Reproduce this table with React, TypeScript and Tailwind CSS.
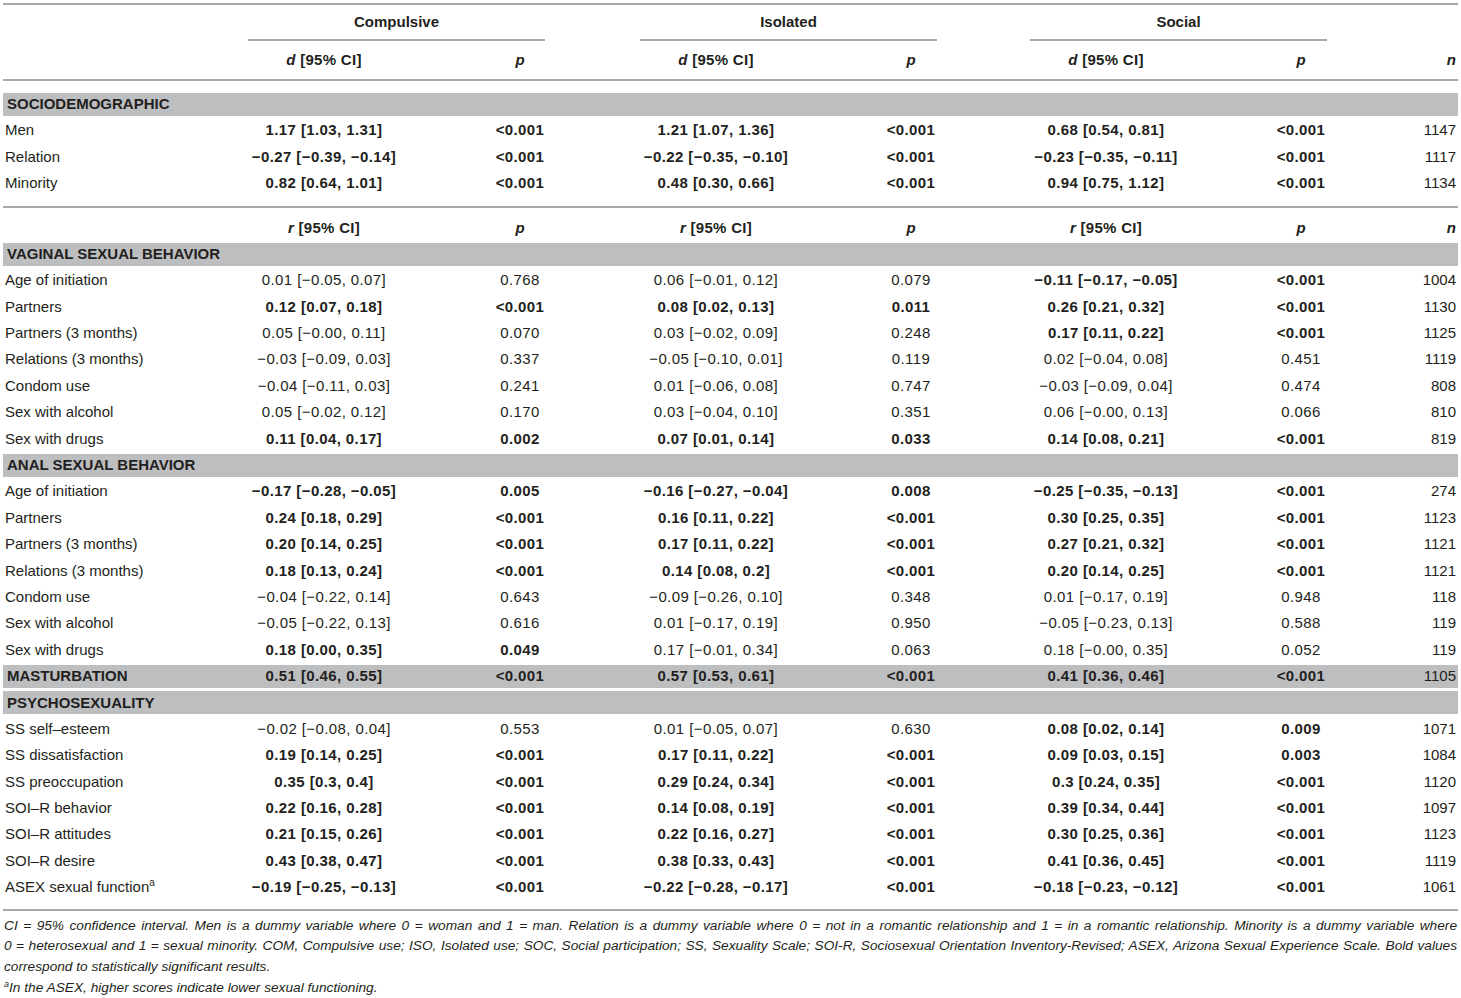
import React from "react";

type Row = { label: React.ReactNode; v: string[]; n: string; band?: boolean };

const GRID =
  "grid grid-cols-[245px_152px_240px_152px_238px_152px_238px_38px] items-center";

function Cell({ s }: { s: string }) {
  const bold = s.startsWith("*");
  const t = bold ? s.slice(1) : s;
  return (
    <div className={"text-center whitespace-nowrap tracking-[0.4px] " + (bold ? "font-bold" : "")}>{t}</div>
  );
}

function DataRow({ r }: { r: Row }) {
  if (r.band) {
    return (
      <div className="h-[26.4px] flex items-center">
        <div className={GRID + " h-[23px] w-full bg-[#bcbec0]"}>
          <div className="pl-[4px] font-bold">{r.label}</div>
          {r.v.map((s, i) => (
            <Cell key={i} s={s} />
          ))}
          <div className="text-right pr-[2px]">{r.n}</div>
        </div>
      </div>
    );
  }
  return (
    <div className={GRID + " h-[26.4px]"}>
      <div className="pl-[2px] whitespace-nowrap">{r.label}</div>
      {r.v.map((s, i) => (
        <Cell key={i} s={s} />
      ))}
      <div className="text-right pr-[2px]">{r.n}</div>
    </div>
  );
}

function Band({ title }: { title: string }) {
  return (
    <div className="h-[26.4px] flex items-center">
      <div className="h-[23px] w-full bg-[#bcbec0] flex items-center pl-[4px] font-bold">{title}</div>
    </div>
  );
}

function SubHead({ letter, tall }: { letter: string; tall?: boolean }) {
  return (
    <div className={GRID + " font-bold " + (tall ? "h-[38px]" : "h-[26.4px]")}>
      <div />
      {[0, 1, 2].map((k) => (
        <React.Fragment key={k}>
          <div className="text-center tracking-[0.3px]">
            <i>{letter}</i> [95% CI]
          </div>
          <div className="text-center">
            <i>p</i>
          </div>
        </React.Fragment>
      ))}
      <div className="text-right pr-[2px]">
        <i>n</i>
      </div>
    </div>
  );
}

const socio: Row[] = [
  { label: "Men", v: ["*1.17 [1.03, 1.31]", "*<0.001", "*1.21 [1.07, 1.36]", "*<0.001", "*0.68 [0.54, 0.81]", "*<0.001"], n: "1147" },
  { label: "Relation", v: ["*−0.27 [−0.39, −0.14]", "*<0.001", "*−0.22 [−0.35, −0.10]", "*<0.001", "*−0.23 [−0.35, −0.11]", "*<0.001"], n: "1117" },
  { label: "Minority", v: ["*0.82 [0.64, 1.01]", "*<0.001", "*0.48 [0.30, 0.66]", "*<0.001", "*0.94 [0.75, 1.12]", "*<0.001"], n: "1134" },
];

const vaginal: Row[] = [
  { label: "Age of initiation", v: ["0.01 [−0.05, 0.07]", "0.768", "0.06 [−0.01, 0.12]", "0.079", "*−0.11 [−0.17, −0.05]", "*<0.001"], n: "1004" },
  { label: "Partners", v: ["*0.12 [0.07, 0.18]", "*<0.001", "*0.08 [0.02, 0.13]", "*0.011", "*0.26 [0.21, 0.32]", "*<0.001"], n: "1130" },
  { label: "Partners (3 months)", v: ["0.05 [−0.00, 0.11]", "0.070", "0.03 [−0.02, 0.09]", "0.248", "*0.17 [0.11, 0.22]", "*<0.001"], n: "1125" },
  { label: "Relations (3 months)", v: ["−0.03 [−0.09, 0.03]", "0.337", "−0.05 [−0.10, 0.01]", "0.119", "0.02 [−0.04, 0.08]", "0.451"], n: "1119" },
  { label: "Condom use", v: ["−0.04 [−0.11, 0.03]", "0.241", "0.01 [−0.06, 0.08]", "0.747", "−0.03 [−0.09, 0.04]", "0.474"], n: "808" },
  { label: "Sex with alcohol", v: ["0.05 [−0.02, 0.12]", "0.170", "0.03 [−0.04, 0.10]", "0.351", "0.06 [−0.00, 0.13]", "0.066"], n: "810" },
  { label: "Sex with drugs", v: ["*0.11 [0.04, 0.17]", "*0.002", "*0.07 [0.01, 0.14]", "*0.033", "*0.14 [0.08, 0.21]", "*<0.001"], n: "819" },
];

const anal: Row[] = [
  { label: "Age of initiation", v: ["*−0.17 [−0.28, −0.05]", "*0.005", "*−0.16 [−0.27, −0.04]", "*0.008", "*−0.25 [−0.35, −0.13]", "*<0.001"], n: "274" },
  { label: "Partners", v: ["*0.24 [0.18, 0.29]", "*<0.001", "*0.16 [0.11, 0.22]", "*<0.001", "*0.30 [0.25, 0.35]", "*<0.001"], n: "1123" },
  { label: "Partners (3 months)", v: ["*0.20 [0.14, 0.25]", "*<0.001", "*0.17 [0.11, 0.22]", "*<0.001", "*0.27 [0.21, 0.32]", "*<0.001"], n: "1121" },
  { label: "Relations (3 months)", v: ["*0.18 [0.13, 0.24]", "*<0.001", "*0.14 [0.08, 0.2]", "*<0.001", "*0.20 [0.14, 0.25]", "*<0.001"], n: "1121" },
  { label: "Condom use", v: ["−0.04 [−0.22, 0.14]", "0.643", "−0.09 [−0.26, 0.10]", "0.348", "0.01 [−0.17, 0.19]", "0.948"], n: "118" },
  { label: "Sex with alcohol", v: ["−0.05 [−0.22, 0.13]", "0.616", "0.01 [−0.17, 0.19]", "0.950", "−0.05 [−0.23, 0.13]", "0.588"], n: "119" },
  { label: "Sex with drugs", v: ["*0.18 [0.00, 0.35]", "*0.049", "0.17 [−0.01, 0.34]", "0.063", "0.18 [−0.00, 0.35]", "0.052"], n: "119" },
];

const mast: Row = {
  label: "MASTURBATION",
  v: ["*0.51 [0.46, 0.55]", "*<0.001", "*0.57 [0.53, 0.61]", "*<0.001", "*0.41 [0.36, 0.46]", "*<0.001"],
  n: "1105",
  band: true,
};

const psycho: Row[] = [
  { label: "SS self–esteem", v: ["−0.02 [−0.08, 0.04]", "0.553", "0.01 [−0.05, 0.07]", "0.630", "*0.08 [0.02, 0.14]", "*0.009"], n: "1071" },
  { label: "SS dissatisfaction", v: ["*0.19 [0.14, 0.25]", "*<0.001", "*0.17 [0.11, 0.22]", "*<0.001", "*0.09 [0.03, 0.15]", "*0.003"], n: "1084" },
  { label: "SS preoccupation", v: ["*0.35 [0.3, 0.4]", "*<0.001", "*0.29 [0.24, 0.34]", "*<0.001", "*0.3 [0.24, 0.35]", "*<0.001"], n: "1120" },
  { label: "SOI–R behavior", v: ["*0.22 [0.16, 0.28]", "*<0.001", "*0.14 [0.08, 0.19]", "*<0.001", "*0.39 [0.34, 0.44]", "*<0.001"], n: "1097" },
  { label: "SOI–R attitudes", v: ["*0.21 [0.15, 0.26]", "*<0.001", "*0.22 [0.16, 0.27]", "*<0.001", "*0.30 [0.25, 0.36]", "*<0.001"], n: "1123" },
  { label: "SOI–R desire", v: ["*0.43 [0.38, 0.47]", "*<0.001", "*0.38 [0.33, 0.43]", "*<0.001", "*0.41 [0.36, 0.45]", "*<0.001"], n: "1119" },
  {
    label: (
      <span>
        ASEX sexual function<span className="text-[10px] relative top-[-6px]">a</span>
      </span>
    ),
    v: ["*−0.19 [−0.25, −0.13]", "*<0.001", "*−0.22 [−0.28, −0.17]", "*<0.001", "*−0.18 [−0.23, −0.12]", "*<0.001"],
    n: "1061",
  },
];

export default function App() {
  return (
    <div
      className="bg-white w-[1461px] h-[998px] text-[15px] text-[#231f20] pt-[3px] pl-[3px] overflow-hidden"
      style={{ fontFamily: '"Liberation Sans", Arial, Helvetica, sans-serif' }}
    >
      <div className="w-[1455px]">
        <div className="h-[2px] bg-[#a7a9ac]" />
        <div className="grid grid-cols-[245px_297px_95px_297px_93px_297px_131px] font-bold">
          <div />
          {["Compulsive", "Isolated", "Social"].map((g) => (
            <React.Fragment key={g}>
              <div className="h-[36px] flex flex-col">
                <div className="flex-1 flex items-center justify-center pt-[1px]">{g}</div>
                <div className="h-[2px] bg-[#a7a9ac]" />
              </div>
              <div />
            </React.Fragment>
          ))}
        </div>
        <SubHead letter="d" tall />
        <div className="h-[2px] bg-[#a7a9ac]" />
        <div className="h-[10px]" />
        <Band title="SOCIODEMOGRAPHIC" />
        {socio.map((r, i) => (
          <DataRow key={i} r={r} />
        ))}
        <div className="h-[9px]" />
        <div className="h-[2px] bg-[#a7a9ac]" />
        <div className="h-[7px]" />
        <SubHead letter="r" />
        <Band title="VAGINAL SEXUAL BEHAVIOR" />
        {vaginal.map((r, i) => (
          <DataRow key={i} r={r} />
        ))}
        <Band title="ANAL SEXUAL BEHAVIOR" />
        {anal.map((r, i) => (
          <DataRow key={i} r={r} />
        ))}
        <DataRow r={mast} />
        <Band title="PSYCHOSEXUALITY" />
        {psycho.map((r, i) => (
          <DataRow key={i} r={r} />
        ))}
        <div className="h-[8px]" />
        <div className="h-[2px] bg-[#a7a9ac]" />
        <div className="pt-[5px] italic text-[13.7px] leading-[20.6px] pl-[1px] pr-[1px]">
          <div className="text-justify [text-align-last:justify]">
            CI = 95% confidence interval. Men is a dummy variable where 0 = woman and 1 = man. Relation is a dummy variable where 0 = not in a romantic relationship and 1 = in a romantic relationship. Minority is a dummy variable where
          </div>
          <div className="text-justify [text-align-last:justify]">
            0 = heterosexual and 1 = sexual minority. COM, Compulsive use; ISO, Isolated use; SOC, Social participation; SS, Sexuality Scale; SOI-R, Sociosexual Orientation Inventory-Revised; ASEX, Arizona Sexual Experience Scale. Bold values
          </div>
          <div>correspond to statistically significant results.</div>
          <div>
            <span className="text-[9px] relative top-[-5px]">a</span>In the ASEX, higher scores indicate lower sexual functioning.
          </div>
        </div>
      </div>
    </div>
  );
}
